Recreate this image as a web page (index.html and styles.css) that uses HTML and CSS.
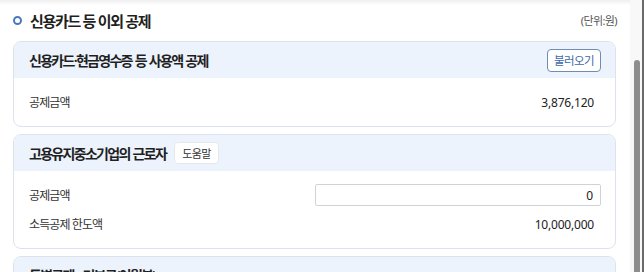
FILE: index.html
```html
<!DOCTYPE html>
<html lang="ko">
<head>
<meta charset="utf-8">
<link rel="stylesheet" href="styles.css">
</head>
<body>
<div class="topshade"></div>
<main class="page">
  <div class="title-row">
    <h2 class="title"><span class="dot"></span>신용카드 등 이외 공제</h2>
    <span class="unit">(단위:원)</span>
  </div>

  <section class="card">
    <div class="card-head">
      <h3 class="card-title">신용카드·현금영수증 등 사용액 공제</h3>
      <button class="btn-load">불러오기</button>
    </div>
    <div class="card-body">
      <div class="row"><span class="label">공제금액</span><span class="value">3,876,120</span></div>
    </div>
  </section>

  <section class="card">
    <div class="card-head">
      <h3 class="card-title">고용유지중소기업의 근로자</h3>
      <button class="btn-help">도움말</button>
    </div>
    <div class="card-body">
      <div class="row"><span class="label">공제금액</span><input class="amount" type="text" value="0"></div>
      <div class="row"><span class="label">소득공제 한도액</span><span class="value">10,000,000</span></div>
    </div>
  </section>

  <section class="card">
    <div class="card-head">
      <h3 class="card-title">특별공제 - 기부금(이월분)</h3>
    </div>
  </section>
</main>
<div class="scrollbar"><div class="thumb"></div></div>
</body>
</html>
```

FILE: styles.css
```css
html, body {
  margin: 0;
  padding: 0;
  background: #fff;
  overflow: hidden;
  height: 272px;
}
body {
  font-family: "Noto Sans", "Noto Sans CJK KR", sans-serif;
  color: #222;
  position: relative;
}
.topshade {
  height: 5px;
  background: linear-gradient(#efefef, #fff);
}
.page {
  padding: 4px 28px 0 13px;
  display: flex;
  flex-direction: column;
  gap: 7px;
}
.title-row {
  display: flex;
  align-items: center;
  justify-content: space-between;
  height: 22px;
  margin-bottom: 3px;
}
.title {
  margin: 0;
  display: flex;
  align-items: center;
  font-size: 15px;
  font-weight: 700;
  letter-spacing: -1.3px;
  color: #1f1f1f;
}
.dot {
  width: 5px;
  height: 5px;
  border: 2px solid #4a78bd;
  border-radius: 50%;
  margin: 0 8px 0 0;
  flex: none;
}
.unit {
  font-size: 11px;
  color: #555;
  letter-spacing: -0.6px;
  margin-right: -1px;
}
.card {
  border: 1px solid #dde3ec;
  border-radius: 8px;
  overflow: hidden;
  background: #fff;
}
.card-head {
  height: 36px;
  background: #edf3fc;
  display: flex;
  align-items: center;
  padding: 0 14px 0 15px;
  gap: 8px;
}
.card-title {
  margin: 0;
  font-size: 14px;
  font-weight: 600;
  letter-spacing: -1.7px;
  word-spacing: 1px;
  color: #1f1f1f;
}
.btn-load {
  margin-left: auto;
  width: 54px;
  height: 23px;
  border: 1px solid #6f8db2;
  border-radius: 4px;
  background: #fff;
  color: #3b68a8;
  font-family: inherit;
  font-size: 11.5px;
  letter-spacing: -0.6px;
  padding: 0;
}
.btn-help {
  width: 45px;
  height: 22px;
  border: 1px solid #e4e8ee;
  border-radius: 4px;
  background: #fff;
  color: #333;
  font-family: inherit;
  font-size: 11px;
  letter-spacing: -0.6px;
  padding: 0;
}
.card-body {
  padding: 13px 21px 13px 15px;
  display: flex;
  flex-direction: column;
  gap: 7px;
}
.row {
  height: 22px;
  display: flex;
  align-items: center;
  justify-content: space-between;
}
.label {
  font-size: 12px;
  color: #333;
  letter-spacing: -0.9px;
}
.value {
  font-size: 12px;
  color: #222;
  letter-spacing: -0.2px;
}
.amount {
  box-sizing: border-box;
  width: 286px;
  height: 22px;
  margin-right: -7px;
  border: 1px solid #cfd3d8;
  border-radius: 2px;
  padding: 0 7px;
  text-align: right;
  font-family: inherit;
  font-size: 12px;
  color: #222;
}
.scrollbar {
  position: absolute;
  top: 0;
  right: 0;
  width: 14px;
  height: 272px;
  background: #f8f8f8;
  border-right: 2px solid #6a6a6a;
  box-sizing: border-box;
}
.thumb {
  position: absolute;
  left: 4px;
  top: 60px;
  width: 6px;
  height: 230px;
  border-radius: 3px;
  background: #8d8d8d;
}
```
